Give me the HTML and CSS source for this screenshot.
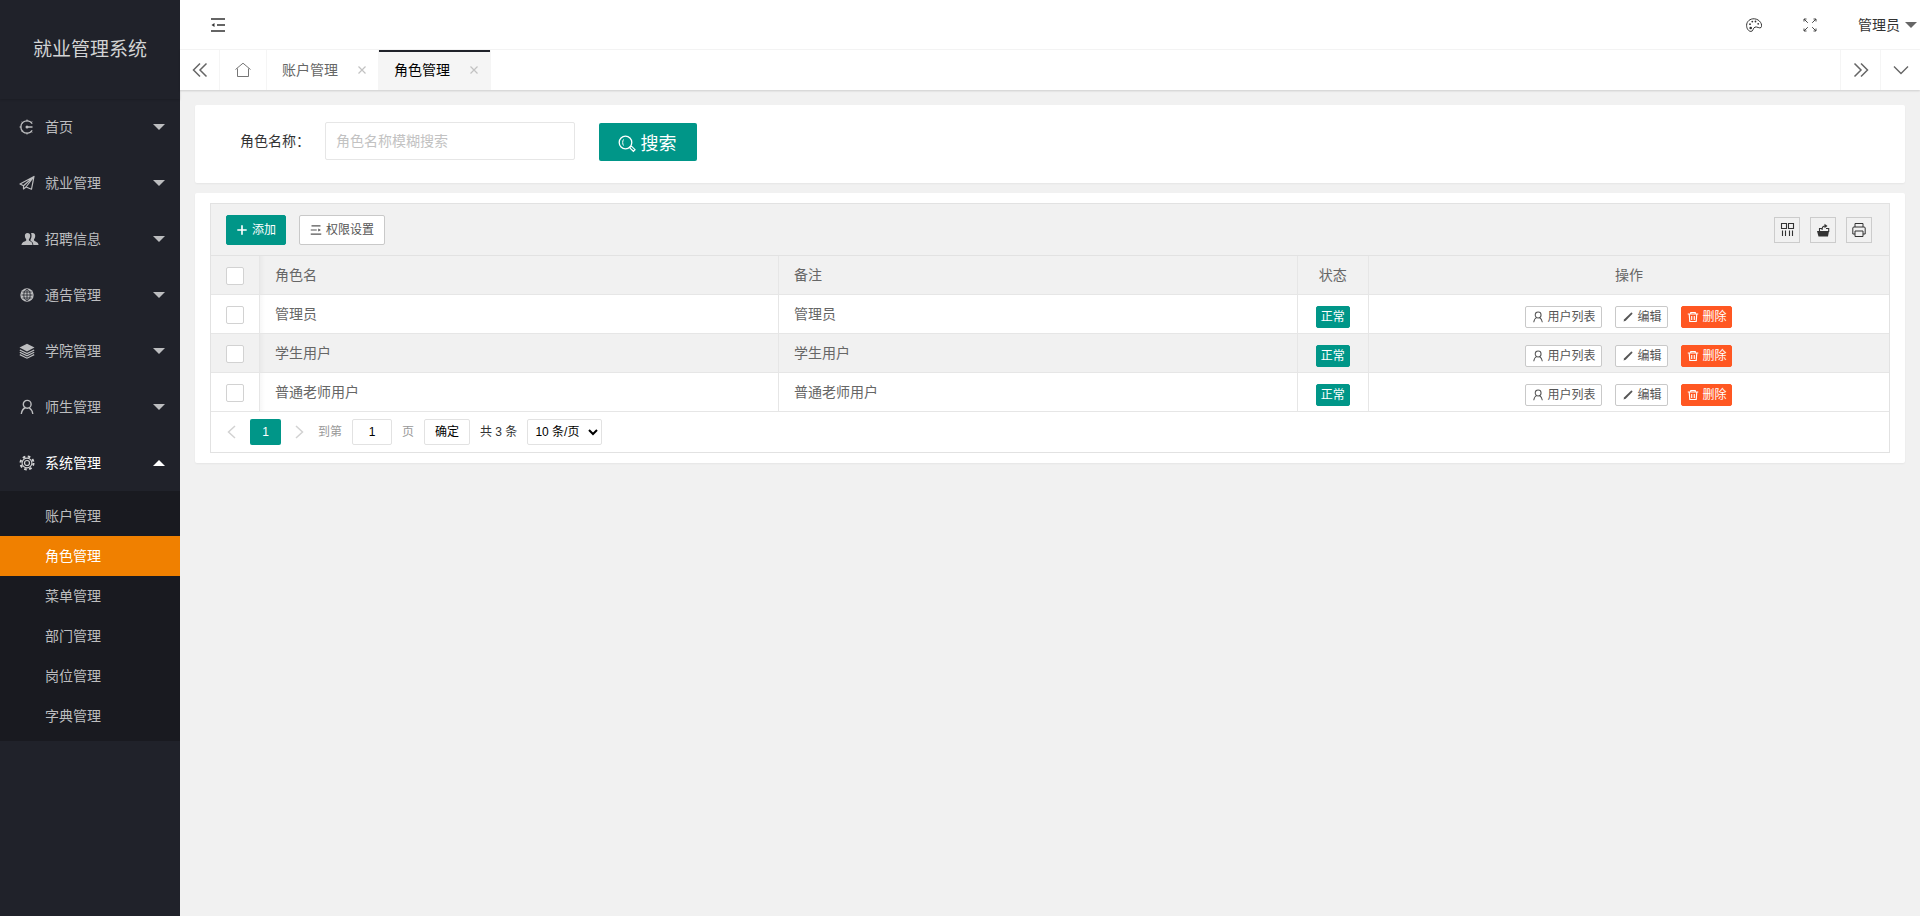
FILE: index.html
```html
<!DOCTYPE html>
<html lang="zh-CN">
<head>
<meta charset="utf-8">
<title>就业管理系统</title>
<link rel="stylesheet" href="styles.css">
</head>
<body>
<svg class="sprite" aria-hidden="true">
  <symbol id="i-home" viewBox="0 0 16 16"><path d="M13.2 4.6A6.2 6.2 0 1 0 13.2 11.4M7 8h6.500" fill="none" stroke="currentColor" stroke-width="1.300"/><path d="M8 .5v2M2.600 3l1.200 1.200M.5 8h2M2.600 13l1.200-1.200M8 15.500v-2M13 2.500l-1 1.400M13 13.500l-1-1.400" stroke="currentColor" fill="none"/><circle cx="8" cy="8" r="1.500" fill="currentColor"/></symbol>
  <symbol id="i-plane" viewBox="0 0 16 16"><path d="M15 1.500 1 9l3.500 1.800L15 1.500 7 12l5.500 2.200L15 1.500M4.500 10.800V14L7 12" fill="none" stroke="currentColor" stroke-width="1.200" stroke-linejoin="round"/></symbol>
  <symbol id="i-users" viewBox="0 0 18 16"><path d="M6.500 2C4.500 2 3.800 3.400 3.900 5c.1 1.500.6 2.500 1.300 3.200v1.300C4.500 10.500 1 10.700.5 13.800V14h11c0-3.300-2.600-3.600-3.600-4.500V8.200C8.800 7.300 9.200 6 9.200 4.800 9.200 3 8.300 2 6.500 2Z" fill="currentColor"/><path d="M10 2.300c2.800-1 4.500.4 4.200 3-.1 1.300-.6 2.300-1.200 2.900v1.300c1 1 4.300 1.200 4.600 4.500h-5.300c0-2.500-1.300-3.500-2.800-4.300V8.500c1.200-1.800 1.500-4.500.5-6.200Z" fill="currentColor"/></symbol>
  <symbol id="i-globe" viewBox="0 0 16 16"><circle cx="8" cy="8" r="6.700" fill="currentColor"/><g fill="none" stroke="#20222a" stroke-width=".8"><ellipse cx="8" cy="8" rx="3.200" ry="5.500"/><path d="M8 2.500v11M2.500 8h11M3.500 5h9M3.500 11h9"/></g></symbol>
  <symbol id="i-stack" viewBox="0 0 16 16"><path d="M8 .8 15.500 4.600 8 8.400.5 4.600Z" fill="currentColor"/><path d="m.8 7 7.200 3.600L15.200 7M.8 9.300 8 12.900l7.200-3.600M.8 11.600 8 15.200l7.200-3.600" fill="none" stroke="currentColor" stroke-width="1.200"/></symbol>
  <symbol id="i-user" viewBox="0 0 16 16"><circle cx="8.200" cy="5.300" r="3.900" fill="none" stroke="currentColor" stroke-width="1.400"/><path d="M6.500 8.500C4.200 9.500 2.800 11.700 2.300 15M10 8.700c2.100 1.300 3.300 3.300 3.800 6.300" fill="none" stroke="currentColor" stroke-width="1.400"/></symbol>
  <symbol id="i-gear" viewBox="0 0 16 16"><g fill="none" stroke="currentColor"><circle cx="8" cy="8" r="2.500" stroke-width="1.200"/><circle cx="8" cy="8" r="4.900" stroke-width="1.100"/><circle cx="8" cy="8" r="6.500" stroke-width="2" stroke-dasharray="2.600 2.505"/></g></symbol>
  <symbol id="i-list" viewBox="0 0 16 16"><path d="M1 2h14M7 8h8M1 14h14" fill="none" stroke="currentColor" stroke-width="1.500"/><path d="M1.500 8l3-2v4Z" fill="currentColor"/></symbol>
  <symbol id="i-list-right" viewBox="0 0 16 16"><path d="M2 2.500h12M1 8h8M1 13.500h14" fill="none" stroke="currentColor" stroke-width="1.400"/><path d="M14.500 8 11 6v4Z" fill="currentColor"/></symbol>
  <symbol id="i-prev2" viewBox="0 0 16 16"><path d="M8 1.500 1.500 8 8 14.500M14.500 1.500 8 8l6.500 6.500" fill="none" stroke="currentColor" stroke-width="1.500"/></symbol>
  <symbol id="i-next2" viewBox="0 0 16 16"><path d="M8 1.500 14.500 8 8 14.500M1.500 1.500 8 8l-6.500 6.500" fill="none" stroke="currentColor" stroke-width="1.500"/></symbol>
  <symbol id="i-prev" viewBox="0 0 16 16"><path d="M11 2 4.500 8l6.500 6" fill="none" stroke="currentColor" stroke-width="1.500"/></symbol>
  <symbol id="i-next" viewBox="0 0 16 16"><path d="m5 2 6.500 6L5 14" fill="none" stroke="currentColor" stroke-width="1.500"/></symbol>
  <symbol id="i-down" viewBox="0 0 16 16"><path d="m1 4.500 7 7 7-7" fill="none" stroke="currentColor" stroke-width="1.400"/></symbol>
  <symbol id="i-house" viewBox="0 0 16 16"><path d="M.5 7.500 8 1.200l7.500 6.300M2.500 6.500v8h11v-8" fill="none" stroke="currentColor" stroke-width=".9"/></symbol>
  <symbol id="i-close" viewBox="0 0 16 16"><path d="m4 4 8 8M12 4l-8 8" fill="none" stroke="currentColor" stroke-width="1.400"/></symbol>
  <symbol id="i-palette" viewBox="0 0 16 16"><path d="M8.300 1.800C4 1.500.6 4.500.6 8.300c0 3.500 2 6.100 4.400 6.100 2.500 0 1.700-3.400 4-4.300 2-.8 4.500 1.700 6 .4C17 8 14 2.200 8.300 1.800Z" fill="none" stroke="currentColor"/><g fill="currentColor"><circle cx="4" cy="7.200" r=".9"/><circle cx="6.300" cy="4.600" r=".9"/><circle cx="9.500" cy="4.500" r=".9"/><circle cx="12.200" cy="6.800" r=".9"/><circle cx="4.700" cy="11" r="1.300"/></g></symbol>
  <symbol id="i-full" viewBox="0 0 16 16"><path d="M2 4.500V2h2.500M2.200 2.200l3.600 3.600M11.500 2H14v2.500M13.800 2.200l-3.600 3.600M2 11.500V14h2.500M2.200 13.800l3.600-3.600M14 11.500V14h-2.500M13.800 13.800l-3.600-3.600" fill="none" stroke="currentColor" stroke-width=".9"/></symbol>
  <symbol id="i-search" viewBox="0 0 18 18"><circle cx="7.500" cy="7.500" r="6.300" fill="none" stroke="currentColor" stroke-width="1.300"/><path d="M5.500 4.500C4.400 6 4.400 9 5.500 10.500" fill="none" stroke="currentColor"/><path d="m12 12 1.500-.8 3.500 3.500-1.600 1.600-3.600-3.400Z" fill="none" stroke="currentColor" stroke-width="1.200"/></symbol>
  <symbol id="i-plus" viewBox="0 0 16 16"><path d="M8 2.500v11M2.500 8h11" fill="none" stroke="currentColor" stroke-width="2.200" stroke-linecap="round"/></symbol>
  <symbol id="i-cols" viewBox="0 0 16 16"><path d="M2.500 1.500h5v5h-5ZM9.500 1.500h5v5h-5ZM3.500 8.500V14M6.500 8.500V14M10.500 8.500V14M13.500 8.500V14" fill="none" stroke="currentColor" stroke-width="1.100"/></symbol>
  <symbol id="i-export" viewBox="0 0 16 16"><path d="M2 9h12l-1 5.500H3.500Z" fill="currentColor"/><path d="M4.500 9.500V6.500H7M11 6.500h2.700V10M7 8c0-3 1-4 3.500-4" fill="none" stroke="currentColor" stroke-width="1.100"/><path d="m9.500 1.800 3 2.200-3 2.200Z" fill="currentColor"/></symbol>
  <symbol id="i-print" viewBox="0 0 16 16"><path d="M4 5V1.500h8V5M4 12H1.800V6Q1.800 5 3 5h10q1.200 0 1.200 1v6H12M4 9h8v5.500H4Z" fill="none" stroke="currentColor" stroke-linejoin="round"/></symbol>
  <symbol id="i-edit" viewBox="0 0 16 16"><path d="m2 14 1-3L12 2.300c1-.8 2.500.7 1.700 1.700L5 13Z" fill="currentColor"/></symbol>
  <symbol id="i-trash" viewBox="0 0 16 16"><path d="M1 4h14M5 4V2h6v2M3 4.500l.7 9.500h8.600l.7-9.500M6.300 6.500v5.500M9.700 6.500v5.500" fill="none" stroke="currentColor" stroke-width="1.500"/></symbol>
</svg>

<div class="app">
  <aside class="sidebar">
    <h1 class="logo">就业管理系统</h1>
    <nav class="menu">
      <a class="menu-item" href="#"><svg class="icon"><use href="#i-home"/></svg><span>首页</span><i class="caret"></i></a>
      <a class="menu-item" href="#"><svg class="icon"><use href="#i-plane"/></svg><span>就业管理</span><i class="caret"></i></a>
      <a class="menu-item" href="#"><svg class="icon icon-wide"><use href="#i-users"/></svg><span>招聘信息</span><i class="caret"></i></a>
      <a class="menu-item" href="#"><svg class="icon"><use href="#i-globe"/></svg><span>通告管理</span><i class="caret"></i></a>
      <a class="menu-item" href="#"><svg class="icon"><use href="#i-stack"/></svg><span>学院管理</span><i class="caret"></i></a>
      <a class="menu-item" href="#"><svg class="icon"><use href="#i-user"/></svg><span>师生管理</span><i class="caret"></i></a>
      <a class="menu-item open" href="#"><svg class="icon"><use href="#i-gear"/></svg><span>系统管理</span><i class="caret up"></i></a>
      <div class="submenu">
        <a href="#">账户管理</a>
        <a class="current" href="#">角色管理</a>
        <a href="#">菜单管理</a>
        <a href="#">部门管理</a>
        <a href="#">岗位管理</a>
        <a href="#">字典管理</a>
      </div>
    </nav>
  </aside>

  <div class="main">
    <header class="topbar">
      <button class="plain" aria-label="收起菜单"><svg class="icon"><use href="#i-list"/></svg></button>
      <div class="topbar-right">
        <button class="plain" aria-label="主题"><svg class="icon"><use href="#i-palette"/></svg></button>
        <button class="plain" aria-label="全屏"><svg class="icon"><use href="#i-full"/></svg></button>
        <a class="account" href="#">管理员<i class="caret"></i></a>
      </div>
    </header>

    <div class="tabs">
      <button class="tab-ctrl" aria-label="向左"><svg class="icon-s"><use href="#i-prev2"/></svg></button>
      <div class="tab-list">
        <a class="tab tab-home" href="#" aria-label="首页"><svg class="icon"><use href="#i-house"/></svg></a>
        <div class="tab"><a href="#">账户管理</a><button class="tab-close" aria-label="关闭"><svg class="icon-c"><use href="#i-close"/></svg></button></div>
        <div class="tab active"><a href="#">角色管理</a><button class="tab-close" aria-label="关闭"><svg class="icon-c"><use href="#i-close"/></svg></button></div>
      </div>
      <button class="tab-ctrl right" aria-label="向右"><svg class="icon-s"><use href="#i-next2"/></svg></button>
      <button class="tab-ctrl right" aria-label="更多"><svg class="icon-s"><use href="#i-down"/></svg></button>
    </div>

    <main class="content">
      <form class="card search">
        <label for="role">角色名称：</label>
        <input id="role" type="text" placeholder="角色名称模糊搜索">
        <button class="btn-search" type="button"><svg><use href="#i-search"/></svg>搜索</button>
      </form>

      <section class="card list">
        <div class="grid">
          <div class="toolbar">
            <button class="btn primary"><svg><use href="#i-plus"/></svg>添加</button>
            <button class="btn"><svg><use href="#i-list-right"/></svg>权限设置</button>
            <div class="tools">
              <button class="tool" aria-label="筛选列"><svg><use href="#i-cols"/></svg></button>
              <button class="tool" aria-label="导出"><svg><use href="#i-export"/></svg></button>
              <button class="tool" aria-label="打印"><svg><use href="#i-print"/></svg></button>
            </div>
          </div>
          <table>
            <colgroup><col class="c-check"><col><col><col class="c-state"><col class="c-actions"></colgroup>
            <thead>
              <tr><th><input type="checkbox" aria-label="全选"></th><th>角色名</th><th>备注</th><th class="center">状态</th><th class="center">操作</th></tr>
            </thead>
            <tbody>
              <tr><td><input type="checkbox" aria-label="选择管理员"></td><td>管理员</td><td>管理员</td><td><div class="actions"><span class="mini primary">正常</span></div></td>
                <td><div class="actions"><button class="mini"><svg><use href="#i-user"/></svg>用户列表</button><button class="mini"><svg><use href="#i-edit"/></svg>编辑</button><button class="mini danger"><svg><use href="#i-trash"/></svg>删除</button></div></td></tr>
              <tr><td><input type="checkbox" aria-label="选择学生用户"></td><td>学生用户</td><td>学生用户</td><td><div class="actions"><span class="mini primary">正常</span></div></td>
                <td><div class="actions"><button class="mini"><svg><use href="#i-user"/></svg>用户列表</button><button class="mini"><svg><use href="#i-edit"/></svg>编辑</button><button class="mini danger"><svg><use href="#i-trash"/></svg>删除</button></div></td></tr>
              <tr><td><input type="checkbox" aria-label="选择普通老师用户"></td><td>普通老师用户</td><td>普通老师用户</td><td><div class="actions"><span class="mini primary">正常</span></div></td>
                <td><div class="actions"><button class="mini"><svg><use href="#i-user"/></svg>用户列表</button><button class="mini"><svg><use href="#i-edit"/></svg>编辑</button><button class="mini danger"><svg><use href="#i-trash"/></svg>删除</button></div></td></tr>
            </tbody>
          </table>
          <div class="pager">
            <button class="arrow" aria-label="上一页"><svg><use href="#i-prev"/></svg></button>
            <button class="page">1</button>
            <button class="arrow" aria-label="下一页"><svg><use href="#i-next"/></svg></button>
            <label class="muted" for="goto">到第</label>
            <input id="goto" type="text" value="1">
            <span class="muted">页</span>
            <button class="go">确定</button>
            <span class="total">共 3 条</span>
            <select aria-label="每页条数"><option>10 条/页</option></select>
          </div>
        </div>
      </section>
    </main>
  </div>
</div>
</body>
</html>
```
FILE: styles.css
```css
* { box-sizing: border-box; }

body {
  margin: 0;
  background: #f1f1f1;
  color: #333;
  font: 14px/24px "Liberation Sans", "Noto Sans CJK SC", sans-serif;
}

a { color: inherit; text-decoration: none; }
button, input, select { margin: 0; font: inherit; color: inherit; }
button { padding: 0; border: 0; background: none; cursor: pointer; }
svg { display: block; flex: none; }

.sprite { position: absolute; width: 0; height: 0; }
.icon { width: 16px; height: 16px; }
.icon-wide { width: 18px; }
.icon-s { width: 16px; height: 16px; }
.icon-c { width: 14px; height: 14px; }

.caret {
  border: 6px solid transparent;
  border-top-color: currentColor;
  border-bottom-width: 0;
}
.caret.up { border-width: 0 6px 6px; border-bottom-color: currentColor; }

.app { display: flex; min-height: 100vh; }

/* Sidebar */
.sidebar {
  flex: none;
  width: 180px;
  background: #20222a;
  color: #bcbdbf;
}
.logo {
  margin: 0;
  height: 99px;
  line-height: 100px;
  text-align: center;
  font-size: 19px;
  font-weight: 400;
  color: #d2d3d4;
  box-shadow: 0 1px 2px rgba(0, 0, 0, .15);
}
.menu-item {
  display: flex;
  align-items: center;
  height: 56px;
  padding: 0 15px 0 19px;
}
.menu-item .icon { margin-right: 10px; }
.menu-item .icon-wide { margin: 0 6px 0 2px; }
.menu-item .caret { margin-left: auto; }
.menu-item.open { color: #fff; }
.menu-item.open .icon { color: #d2d3d4; }
.submenu { padding: 5px 0; background: #191a20; }
.submenu a {
  display: block;
  padding-left: 45px;
  line-height: 40px;
}
.submenu .current { background: #f08000; color: #fff; }

/* Top bar */
.main { flex: 1; min-width: 0; }
.topbar {
  display: flex;
  align-items: center;
  justify-content: space-between;
  height: 50px;
  padding: 1px 3px 0 30px;
  border-bottom: 1px solid #f5f5f5;
  background: #fff;
}
.topbar-right { display: flex; align-items: center; gap: 40px; }
.account { display: flex; align-items: center; gap: 5px; }
.account .caret { border-top-color: #666; }

/* Tabs */
.tabs {
  position: relative;
  display: flex;
  height: 40px;
  background: #fff;
  box-shadow: 0 1px 2px rgba(0, 0, 0, .15);
  color: #666;
}
.tab-ctrl {
  display: flex;
  align-items: center;
  justify-content: center;
  width: 40px;
  border-right: 1px solid #f5f5f5;
}
.tab-ctrl.right { border-right: 0; border-left: 1px solid #f5f5f5; }
.tab-list { display: flex; flex: 1; }
.tab {
  display: flex;
  align-items: center;
  gap: 16px;
  padding: 0 8px 0 15px;
  border-right: 1px solid #f5f5f5;
}
.tab-home { padding: 0 15px; }
.tab.active {
  background: #f5f5f5;
  color: #000;
  box-shadow: inset 0 2px #20222a;
}
.tab-close { padding: 1px; color: #c2c2c2; }

/* Content */
.content { display: grid; gap: 10px; padding: 15px; }
.card {
  border-radius: 2px;
  background: #fff;
  box-shadow: 0 1px 2px rgba(0, 0, 0, .05);
}

.search { display: flex; padding: 17px 45px 22px; }
.search label { width: 85px; line-height: 38px; }
.search input {
  width: 250px;
  height: 38px;
  margin-right: 24px;
  padding: 0 10px;
  border: 1px solid #e6e6e6;
  border-radius: 2px;
}
.search input::placeholder { color: #c2c2c2; opacity: 1; }
.btn-search {
  display: flex;
  align-items: center;
  justify-content: center;
  gap: 5px;
  width: 98px;
  height: 38px;
  margin-top: 1px;
  padding: 4px 2px 0 0;
  border-radius: 2px;
  background: #009688;
  color: #fff;
  font-size: 18px;
}
.btn-search svg { width: 18px; height: 18px; }

.list { padding: 10px 15px; }
.grid { border: 1px solid #e2e2e2; color: #666; }
.toolbar {
  display: flex;
  align-items: flex-start;
  padding: 11px 17px 10px 15px;
  border-bottom: 1px solid #e2e2e2;
  background: #f1f1f1;
}
.btn {
  display: flex;
  align-items: center;
  gap: 4px;
  height: 30px;
  margin-right: 13px;
  padding: 0 10px;
  border: 1px solid #c9c9c9;
  border-radius: 2px;
  background: #fff;
  color: #555;
  font-size: 12px;
}
.btn svg { width: 12px; height: 12px; }
.btn.primary { padding: 0 9px; background: #009688; border-color: #009688; color: #fff; }
.tools { display: flex; gap: 10px; margin: 2px 0 0 auto; }
.tool {
  display: flex;
  align-items: center;
  justify-content: center;
  width: 26px;
  height: 26px;
  border: 1px solid #ccc;
  color: #333;
}
.tool svg { width: 16px; height: 16px; }

table { width: 100%; table-layout: fixed; border-spacing: 0; }
.c-check { width: 49px; }
.c-state { width: 71px; }
.c-actions { width: 31%; }
th, td {
  height: 39px;
  padding: 0 15px;
  border: solid #e6e6e6;
  border-width: 0 1px 1px 0;
  text-align: left;
  font-weight: 400;
}
th:last-child, td:last-child { border-right: 0; }
th:nth-child(4), td:nth-child(4) { padding: 0; }
th:nth-child(2), td:nth-child(2) {
  background: linear-gradient(to right, rgba(0, 0, 0, .03), transparent 5px);
}
thead, tbody tr:nth-child(even) { background: #f1f1f1; }
th.center { text-align: center; }
input[type="checkbox"] {
  appearance: none;
  display: block;
  width: 18px;
  height: 18px;
  margin-top: 2px;
  border: 1px solid #d2d2d2;
  border-radius: 2px;
  background: #fff;
}
.actions {
  display: flex;
  justify-content: center;
  gap: 13px;
  padding-top: 5px;
}
.mini {
  display: flex;
  align-items: center;
  gap: 3px;
  height: 22px;
  padding: 0 6px;
  border: 1px solid #c9c9c9;
  border-radius: 2px;
  background: #fff;
  color: #555;
  font-size: 12px;
}
.mini.primary { padding: 0 4px; background: #009688; border-color: #009688; color: #fff; }
.mini.danger { padding: 0 5px; background: #ff5722; border-color: #ff5722; color: #fff; }
.mini svg { width: 12px; height: 12px; }

/* Pagination */
.pager {
  display: flex;
  align-items: center;
  gap: 10px;
  height: 40px;
  padding: 0 13px;
  font-size: 12px;
  color: #333;
}
.arrow { color: #d2d2d2; }
.arrow svg { width: 16px; height: 16px; }
.page {
  width: 31px;
  height: 26px;
  border-radius: 2px;
  background: #009688;
  color: #fff;
}
.muted { color: #999; }
label.muted { margin-left: 1px; }
.pager input, .go, .pager select {
  height: 26px;
  border: 1px solid #e2e2e2;
  border-radius: 2px;
  background: #fff;
  color: #000;
}
.pager input { width: 40px; text-align: center; }
.go { width: 46px; }
.pager select { width: 75px; padding: 0 3px; }
```
